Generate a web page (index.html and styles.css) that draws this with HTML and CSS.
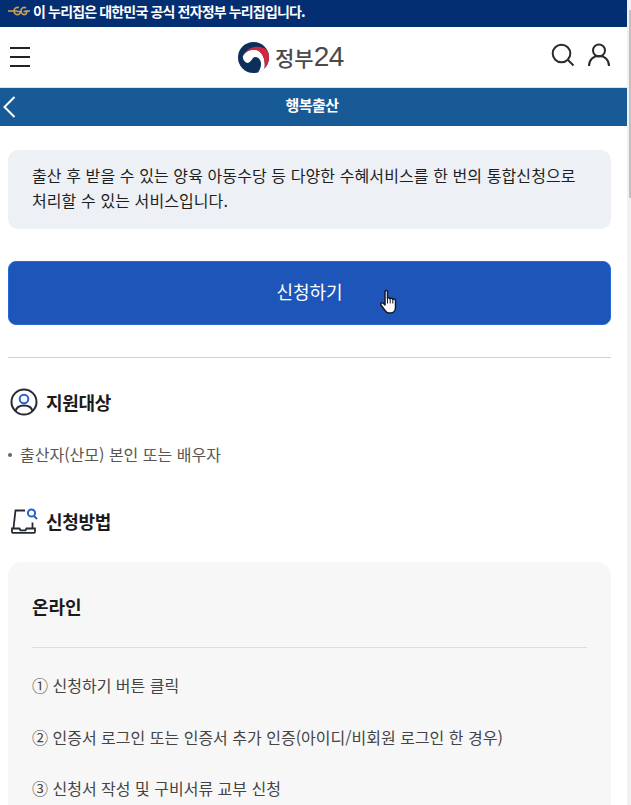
FILE: index.html
```html
<!DOCTYPE html>
<html lang="ko">
<head>
  <meta charset="UTF-8">
  <meta name="viewport" content="width=device-width, initial-scale=1.0">
  <title>행복출산</title>
  <link rel="stylesheet" href="styles.css">
</head>
<body>
  <div class="page">
    <div class="gov-banner">
      <svg class="gov-mark" width="22" height="10" viewBox="0 0 22 10" fill="none" stroke="#c8a050" stroke-width="1.600">
        <path d="M0 5h9"/>
        <path d="M11 1.500C8 .8 6 2.500 6 5s2 4 4.500 3.500C12 8 12.500 7 12.500 5.500H9"/>
        <path d="M18 2c-2-1.400-5-.5-5 3s3 4.300 5 3c.6-.5.8-1.500.8-2.500H15.500"/>
        <path d="M17 5h5" stroke="#a9a48c"/>
      </svg>
      <span>이 누리집은 대한민국 공식 전자정부 누리집입니다.</span>
    </div>

    <header class="top-bar">
      <button class="menu-btn" aria-label="메뉴"><i></i><i></i><i></i></button>
      <div class="logo">
        <svg width="31" height="31" viewBox="0 0 31 31">
          <circle cx="15.500" cy="15.500" r="15.500" fill="#0c2f5c"/>
          <path d="M5 14C8 8 15 6.500 20 8.500 26 12 27.500 20 26.500 26.500 25 28.500 23 29.500 20 30.500 22 28 24 23 22.500 19 21 15 17 14 15 16 13 19 11 22 8 20.500 5.500 19 4.500 16 5 14Z" fill="#fff"/>
          <path d="M5 14C8 6 20 1 29 8A15.500 15.500 0 0 1 26.500 26.500C27.500 20 26 12 20 8.500 15 6.500 8 8 5 14Z" fill="#d2273c"/>
        </svg>
        <span class="logo-text"><span class="logo-ko">정부</span><span class="logo-num">24</span></span>
      </div>
      <div class="top-icons">
        <svg width="24" height="24" viewBox="0 0 24 24" fill="none" stroke="#2b2b2b" stroke-width="2">
          <circle cx="10.500" cy="10.500" r="8.800"/>
          <path d="M17 17l5.500 5.500"/>
        </svg>
        <svg width="24" height="24" viewBox="0 0 24 24" fill="none" stroke="#2b2b2b" stroke-width="2">
          <circle cx="12" cy="7.500" r="6"/>
          <path d="M2 23c0-6 4-10 10-10s10 4 10 10"/>
        </svg>
      </div>
    </header>

    <div class="title-bar">
      <svg class="back-icon" width="13" height="22" viewBox="0 0 13 22" fill="none" stroke="#fff" stroke-width="2">
        <path d="M11.500 1L1.500 11l10 10"/>
      </svg>
      <h1>행복출산</h1>
    </div>

    <main class="content">
      <p class="summary">출산 후 받을 수 있는 양육 아동수당 등 다양한 수혜서비스를 한 번의 통합신청으로 처리할 수 있는 서비스입니다.</p>

      <div class="apply-wrap">
        <a class="apply-btn" href="#">신청하기</a>
        <svg class="hand-cursor" width="18" height="26" viewBox="0 0 18 25">
          <path d="M5 2c0-1.500 2.500-1.500 2.500 0v7c.5-1 2.500-1 2.700.3.5-1 2.500-.8 2.600.6.7-.8 2.700-.5 2.700 1.100V18c0 3-2 5.500-5 5.500H9c-2 0-3-1-4-2.500L1 15.500c-1-1.500 1-3 2.300-1.800L5 15.500Z" fill="#fff" stroke="#14182c" stroke-width="1.500" stroke-linejoin="round"/>
          <path d="M7.500 9v5M10.200 9.500V14M12.800 10v4" stroke="#14182c" stroke-width="1" fill="none"/>
        </svg>
      </div>

      <hr class="divider">

      <section class="info-section">
        <h2 class="section-title">
          <svg width="28" height="28" viewBox="0 0 28 28" fill="none">
            <circle cx="14" cy="14" r="12.500" stroke="#262b33" stroke-width="2"/>
            <circle cx="14" cy="11" r="4.300" stroke="#2a62c9" stroke-width="2"/>
            <path d="M5.500 23c1-4 4.500-5.500 8.500-5.500s7.500 1.500 8.500 5.500" stroke="#262b33" stroke-width="2"/>
          </svg>
          지원대상
        </h2>
        <ul class="target-list">
          <li>출산자(산모) 본인 또는 배우자</li>
        </ul>
      </section>

      <section class="info-section method-section">
        <h2 class="section-title">
          <svg width="28" height="28" viewBox="0 0 28 28" fill="none">
            <path d="M15 3.500H5.500L3.500 21M22.500 15.500V21" stroke="#262b33" stroke-width="1.800"/>
            <path d="M2 21.500h7.500l1 1.800h5l1-1.800H25v3.200c0 .7-.5 1.100-1.100 1.100H3.100c-.6 0-1.100-.4-1.100-1.100Z" stroke="#262b33" stroke-width="1.800"/>
            <circle cx="21.500" cy="6" r="3.600" stroke="#2a62c9" stroke-width="2"/>
            <path d="M24 9l3 3" stroke="#2a62c9" stroke-width="2"/>
          </svg>
          신청방법
        </h2>
        <div class="method-card">
          <h3>온라인</h3>
          <ol class="method-steps">
            <li>① 신청하기 버튼 클릭</li>
            <li>② 인증서 로그인 또는 인증서 추가 인증(아이디/비회원 로그인 한 경우)</li>
            <li>③ 신청서 작성 및 구비서류 교부 신청</li>
          </ol>
        </div>
      </section>
    </main>
  </div>
  <div class="scroll-track"><div class="scroll-thumb"></div></div>
</body>
</html>
```

FILE: styles.css
```css
html, body {
  height: 100%;
}

body {
  margin: 0;
  overflow: hidden;
  background: #fff;
  color: #1b1b1b;
  font-family: "Noto Sans CJK KR", "Noto Sans", sans-serif;
}

.page {
  width: 627px;
  height: 100vh;
  overflow: hidden;
}

.gov-banner {
  display: flex;
  align-items: center;
  gap: 3px;
  height: 27px;
  padding-left: 8px;
  padding-bottom: 5px;
  box-sizing: border-box;
  background: #042e72;
  color: #fff;
  font-size: 14px;
  font-weight: 700;
  letter-spacing: -0.85px;
}

.top-bar {
  display: flex;
  align-items: center;
  justify-content: space-between;
  position: relative;
  height: 61px;
  padding: 0 16px 0 10px;
  box-sizing: border-box;
  border-bottom: 1px solid #dfe3e8;
}

.menu-btn {
  display: flex;
  flex-direction: column;
  gap: 7px;
  width: 20px;
  padding: 0;
  border: none;
  background: none;
}

.menu-btn i {
  display: block;
  height: 2px;
  background: #222;
}

.logo {
  display: flex;
  align-items: center;
  gap: 6px;
  position: absolute;
  left: 238px;
  top: 15px;
}

.logo-text {
  display: flex;
  align-items: baseline;
  margin-top: -2px;
  color: #4a4a4a;
  line-height: 31px;
}

.logo-ko {
  font-size: 21px;
  font-weight: 500;
}

.logo-num {
  font-family: "Liberation Sans", sans-serif;
  font-size: 28px;
  letter-spacing: -0.5px;
}

.top-icons {
  display: flex;
  gap: 12px;
  margin-bottom: 4px;
}

.title-bar {
  display: flex;
  align-items: center;
  justify-content: center;
  position: relative;
  height: 38px;
  padding-right: 3px;
  box-sizing: border-box;
  background: #175a96;
  color: #fff;
}

.title-bar h1 {
  margin: 0;
  font-size: 15px;
  font-weight: 700;
  letter-spacing: -0.6px;
  line-height: 33px;
  padding-bottom: 5px;
}

.back-icon {
  position: absolute;
  left: 3px;
  top: 8px;
}

.content {
  padding: 24px 16px 0 8px;
}

.summary {
  margin: 0;
  padding: 13px 24px 16px;
  border-radius: 10px;
  background: #edf0f5;
  color: #1e1e1e;
  font-size: 16px;
  line-height: 25px;
  letter-spacing: 0.09px;
}

.apply-wrap {
  position: relative;
  margin-top: 32px;
}

.apply-btn {
  display: block;
  height: 64px;
  box-sizing: border-box;
  border: 1px solid #2a66d4;
  border-radius: 8px;
  background: #1d56b8;
  color: #fff;
  font-size: 18px;
  line-height: 58px;
  text-align: center;
  text-decoration: none;
}

.hand-cursor {
  position: absolute;
  left: 372px;
  top: 28px;
}

.divider {
  height: 1px;
  margin: 32px 0 0;
  border: none;
  background: #cfcfcf;
}

.info-section {
  margin-top: 29px;
}

.method-section {
  margin-top: 40px;
}

.section-title {
  display: flex;
  align-items: center;
  gap: 8px;
  margin: 0;
  padding-left: 2px;
  font-size: 18px;
  font-weight: 700;
  line-height: 30px;
  letter-spacing: -0.3px;
}

.target-list {
  margin: 25px 0 0;
  padding: 0 0 0 12px;
  list-style: none;
  color: #5a5550;
  font-size: 16px;
  line-height: 24px;
}

.target-list li {
  position: relative;
}

.target-list li::before {
  content: "";
  position: absolute;
  left: -12px;
  top: 11px;
  width: 4px;
  height: 4px;
  border-radius: 50%;
  background: #666;
}

.method-card {
  margin-top: 26px;
  padding: 32px 24px 24px;
  border-radius: 14px;
  background: #f7f7f7;
}

.method-card h3 {
  margin: 0;
  padding-bottom: 29px;
  border-bottom: 1px solid #dcdcdc;
  font-size: 18px;
  font-weight: 700;
  line-height: 24px;
}

.method-steps {
  margin: 0;
  padding: 25px 0 0;
  list-style: none;
  color: #444;
  font-size: 16px;
  line-height: 24px;
}

.method-steps li {
  margin-bottom: 27.500px;
}

.scroll-track {
  position: fixed;
  top: 0;
  right: 0;
  bottom: 0;
  width: 4px;
  background: #f1f1f1;
}

.scroll-thumb {
  height: 188px;
  margin-top: 10px;
  margin-left: 2px;
  background: #c1c1c1;
}
```
